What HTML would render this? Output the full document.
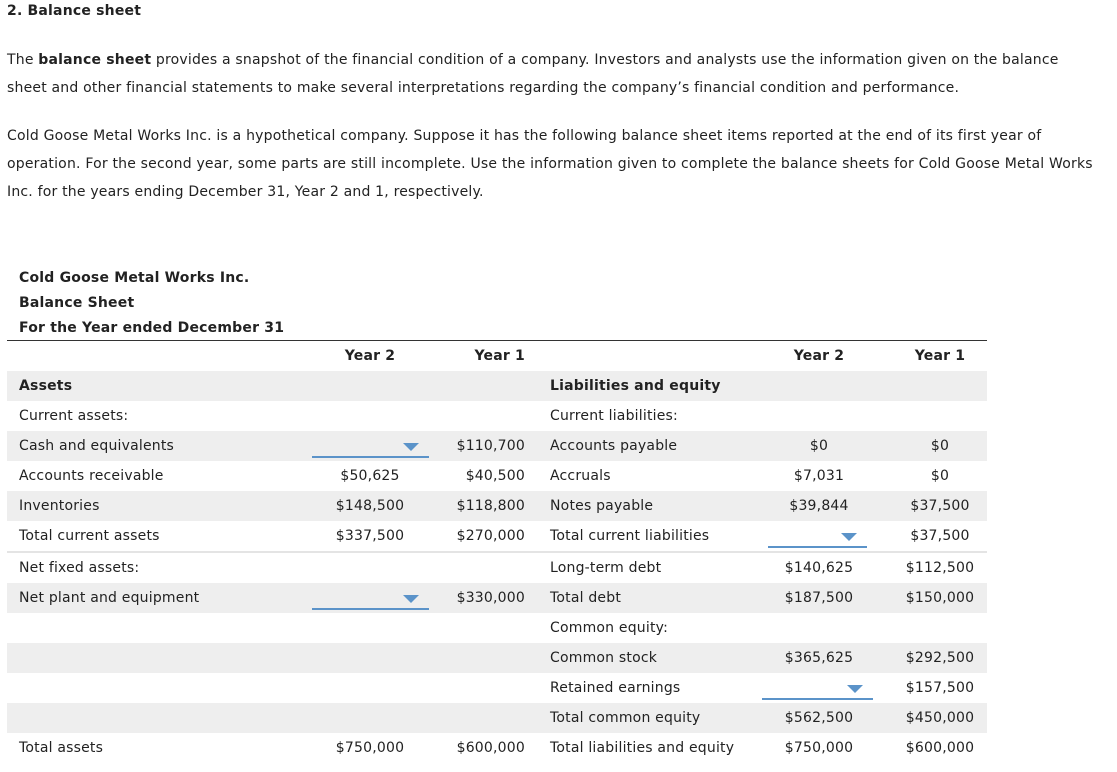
<!DOCTYPE html>
<html><head><style>
body{margin:0;width:1117px;height:772px;background:#fff;font-family:"DejaVu Sans","Liberation Sans",sans-serif;font-size:14px;letter-spacing:0.2px;color:#222;position:relative;overflow:hidden}
.a{position:absolute;white-space:nowrap;line-height:20px}
.b{font-weight:bold}
.row{position:absolute;left:7px;width:980px;height:30px}
.g{background:#eeeeee}
.c{position:absolute;white-space:nowrap;line-height:30px;text-align:center}
.dd{position:absolute;height:30px}
.dd i{position:absolute;left:0;right:0;bottom:3px;height:2px;background:#5b93c9}
.dd b{position:absolute;right:10px;top:12px;width:0;height:0;border-left:8px solid transparent;border-right:8px solid transparent;border-top:8px solid #5b93c9}
</style></head><body>
<div class="a b" style="left:7px;top:1px">2. Balance sheet</div>
<div class="a" style="left:7px;top:50px">The <b>balance sheet</b> provides a snapshot of the financial condition of a company. Investors and analysts use the information given on the balance</div>
<div class="a" style="left:7px;top:78px">sheet and other financial statements to make several interpretations regarding the company’s financial condition and performance.</div>
<div class="a" style="left:7px;top:126px">Cold Goose Metal Works Inc. is a hypothetical company. Suppose it has the following balance sheet items reported at the end of its first year of</div>
<div class="a" style="left:7px;top:154px">operation. For the second year, some parts are still incomplete. Use the information given to complete the balance sheets for Cold Goose Metal Works</div>
<div class="a" style="left:7px;top:182px">Inc. for the years ending December 31, Year 2 and 1, respectively.</div>
<div class="a b" style="left:19px;top:268px">Cold Goose Metal Works Inc.</div>
<div class="a b" style="left:19px;top:293px">Balance Sheet</div>
<div class="a b" style="left:19px;top:318px">For the Year ended December 31</div>
<div style="position:absolute;left:7px;top:340px;width:980px;height:1px;background:#333"></div>
<div class="row g" style="top:371px"></div>
<div class="row g" style="top:431px"></div>
<div class="row g" style="top:491px"></div>
<div class="row" style="top:551px;height:2px;background:#e4e4e4"></div>
<div class="row g" style="top:583px"></div>
<div class="row g" style="top:643px"></div>
<div class="row g" style="top:703px"></div>
<div id="t"></div>
<script>
var rows=[
[341,"","<b>Year 2</b>","<b>Year 1</b>","","<b>Year 2</b>","<b>Year 1</b>"],
[371,"<b>Assets</b>","","","<b>Liabilities and equity</b>","",""],
[401,"Current assets:","","","Current liabilities:","",""],
[431,"Cash and equivalents","D","$110,700","Accounts payable","$0","$0"],
[461,"Accounts receivable","$50,625","$40,500","Accruals","$7,031","$0"],
[491,"Inventories","$148,500","$118,800","Notes payable","$39,844","$37,500"],
[521,"Total current assets","$337,500","$270,000","Total current liabilities","D1","$37,500"],
[553,"Net fixed assets:","","","Long-term debt","$140,625","$112,500"],
[583,"Net plant and equipment","D","$330,000","Total debt","$187,500","$150,000"],
[613,"","","","Common equity:","",""],
[643,"","","","Common stock","$365,625","$292,500"],
[673,"","","","Retained earnings","D2","$157,500"],
[703,"","","","Total common equity","$562,500","$450,000"],
[733,"Total assets","$750,000","$600,000","Total liabilities and equity","$750,000","$600,000"]];
var h="";
function cell(x,w,t,y){return '<div class="c" style="left:'+x+'px;width:'+w+'px;top:'+y+'px">'+t+'</div>';}
function dd(x,w,y){return '<div class="dd" style="left:'+x+'px;width:'+w+'px;top:'+y+'px"><i></i><b></b></div>';}
rows.forEach(function(r){var y=r[0];
h+='<div class="c" style="left:19px;top:'+y+'px;text-align:left">'+r[1]+'</div>';
h+= r[2]=="D"?dd(312,117,y):cell(310,120,r[2],y);
h+='<div class="c" style="left:430px;width:95px;top:'+y+'px;text-align:right">'+r[3]+'</div>';
h+='<div class="c" style="left:550px;top:'+y+'px;text-align:left">'+r[4]+'</div>';
if(r[5]=="D1")h+=dd(768,99,y);else if(r[5]=="D2")h+=dd(762,111,y);else h+=cell(769,100,r[5],y);
h+=cell(890,100,r[6],y);});
document.getElementById("t").innerHTML=h;
</script>
</body></html>
